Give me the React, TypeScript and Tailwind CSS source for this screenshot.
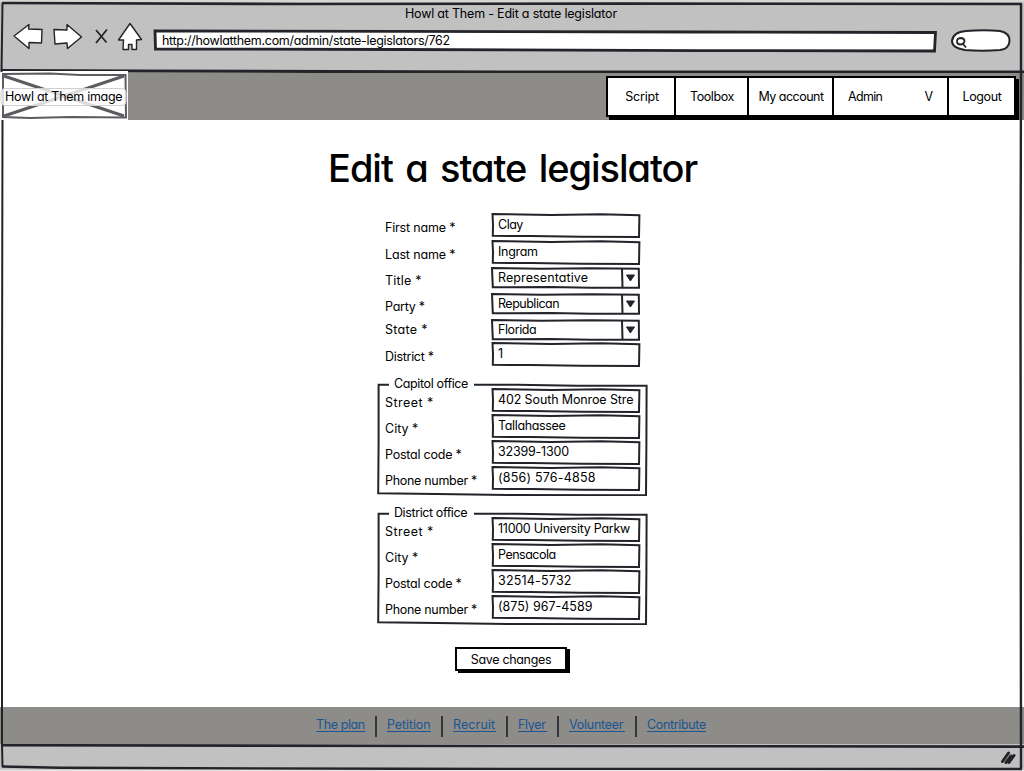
import type { ReactNode } from "react";

const INK = "#22242a";

function Label({ children, className = "" }: { children: ReactNode; className?: string }) {
  return <span className={`block whitespace-nowrap leading-[16px] ${className}`}>{children}</span>;
}

function FieldFrame() {
  return (
    <svg className="absolute inset-0 h-full w-full" viewBox="0 0 150 25" preserveAspectRatio="none" fill="none" stroke={INK} strokeWidth="2">
      <path d="M1.5 1 L60 2 L110 1.3 L148.4 2.2 L148 24 L90 23.8 L40 23 L1.8 22.8 L2 12 Z" fill="#fff" vectorEffect="non-scaling-stroke" />
    </svg>
  );
}

function TextField({ value, spacing }: { value: string; spacing: string }) {
  return (
    <div className="relative h-[25px] w-[150px] shrink-0">
      <FieldFrame />
      <Label className={`relative pl-[7px] pt-[4px] ${spacing}`}>{value}</Label>
    </div>
  );
}

function SelectField({ value, spacing }: { value: string; spacing: string }) {
  return (
    <div className="relative mt-[1px] h-[22px] w-[150px] shrink-0">
      <svg className="absolute inset-0 h-full w-full" viewBox="0 0 150 22" fill="none" stroke={INK} strokeWidth="2">
        <path d="M1 1 L50 1.8 L100 1.2 L147.8 1.8 L148 20.8 L100 20.8 L60 20 L1.8 20.2 Z" fill="#fff" />
        <path d="M131 1.5 L131.5 20.5" />
        <path d="M135.5 8 L143.5 8 L139.4 14 Z" fill={INK} strokeWidth="1" />
      </svg>
      <Label className={`relative pl-[7px] pt-[3px] ${spacing}`}>{value}</Label>
    </div>
  );
}

type RowProps = { label: string; ls: string; value: string; vs: string; select?: boolean; size: string; pad: string };

function Row({ label, ls, value, vs, select, size, pad }: RowProps) {
  return (
    <div className={`flex items-start ${size}`}>
      <Label className={`w-[106px] shrink-0 ${pad} ${ls}`}>{label}</Label>
      {select ? <SelectField value={value} spacing={vs} /> : <TextField value={value} spacing={vs} />}
    </div>
  );
}

function Office({ title, ts, rows }: { title: string; ts: string; rows: [string, string, string, string][] }) {
  return (
    <section className="relative h-[114px] w-[271px]">
      <svg className="absolute inset-0 h-full w-full" viewBox="0 0 271 114" fill="none" stroke={INK} strokeWidth="2">
        <path d="M12 2.8 L1.6 2.8 L1.6 60 L1.2 111.3 L60 112 L130 113 L269 113.3 L269.4 60 L269.6 3.8 L200 3.8 L140 2.8 L97 2.8" />
      </svg>
      <Label className={`absolute -top-[6px] left-[17px] ${ts}`}>{title}</Label>
      <div className="relative pl-[8px] pt-[6px]">
        {rows.map(([label, ls, value, vs]) => (
          <Row key={label} label={label} ls={ls} value={value} vs={vs} size="h-[26px]" pad="pt-[7px]" />
        ))}
      </div>
    </section>
  );
}

function NavItem({ children, width }: { children: ReactNode; width: string }) {
  return <div className={`flex items-center justify-center whitespace-nowrap border-l-2 border-black ${width}`}>{children}</div>;
}

function BrowserBar() {
  return (
    <header className="relative h-[73px] shrink-0 bg-[#c1c1c1]">
      <svg className="absolute inset-0" width="1024" height="73" fill="none" stroke={INK}>
        <path d="M0 1 H1024" stroke="#d6d6d2" strokeWidth="2" />
        <path d="M2 3 L300 4 L620 3.6 L1022 4" strokeWidth="2.6" />
        <path d="M2 70.5 L140 71 L500 72 L1024 72" strokeWidth="3" />
        <g fill="#fff" strokeWidth="1.4" strokeLinejoin="round">
          <path d="M14 36 L29 24.5 L28.5 29 L42 29.5 L41.5 43 L29 42.5 L29 48.5 Z" />
          <path d="M54 29.5 L67 30 L67 24.5 L81.5 37 L67.5 48.5 L67 43 L55 44 Z" />
          <path d="M130 23.5 L141.5 39.5 L136.5 40 L136.5 49.5 L132 49.5 L132 44.5 L128.5 44.5 L128.5 49.5 L123 49.5 L123.5 40 L118.5 40 Z" />
        </g>
        <path d="M96 30 L106.5 42.5 M107 29.5 L96 43" strokeWidth="1.8" />
        <path d="M155 31 L400 31.4 L700 32 L935.5 32.5 L934.5 51 L700 50.6 L400 49.5 L155.5 49 Z" fill="#fff" strokeWidth="2.8" />
        <path d="M966 31 Q984 29.5 1000 31 Q1010 33 1009.5 41 Q1009 49 1000 50 Q982 51.5 965 50 Q952 48 952 41 Q953 32 966 31 Z" fill="#fff" strokeWidth="2" />
        <path d="M960.5 38 Q964.5 38 964.5 41.5 Q963.5 44.5 960.5 44.5 Q957 44.5 957 41.5 Q957 38.300 960.5 38 Z M963 44 L966 47.5" strokeWidth="1.8" />
      </svg>
      <Label className="relative pt-[6px] pl-[405px] tracking-[-0.2px]">Howl at Them - Edit a state legislator</Label>
      <Label className="relative pt-[11px] pl-[162px] tracking-[-0.3px]">http://howlatthem.com/admin/state-legislators/762</Label>
    </header>
  );
}

function Banner() {
  return (
    <div className="flex h-[47px] shrink-0 items-start justify-between bg-[#8d8c89]">
      <div className="relative -mt-[2px] h-[49px] w-[128px] bg-white">
        <svg className="absolute inset-0" width="128" height="49" fill="none" stroke="#5c5c60" strokeWidth="2">
          <path d="M3 3 L50 2.5 L80 4 L125.5 4 L126 46.5 L70 46 L30 47 L3 46 Z" />
          <path d="M4 5 L124 45 M4 45 L124 5" strokeWidth="3" />
          <rect x="1" y="17.5" width="125" height="17" rx="4" fill="#fff" fillOpacity=".78" stroke="#d0d0d0" strokeWidth="1" />
        </svg>
        <Label className="relative pt-[18px] pl-[5px] tracking-[-0.28px]">Howl at Them image</Label>
      </div>
      <nav className="mr-[8px] mt-[3px] flex h-[41px] border-r-2 border-y-2 border-black bg-white shadow-[3px_3px_0_#000]">
        <NavItem width="w-[68px] pl-[2px] tracking-[-0.2px]">Script</NavItem>
        <NavItem width="w-[73px] pl-[1px] tracking-[-0.4px]">Toolbox</NavItem>
        <NavItem width="w-[85px] pl-[1px] tracking-[-0.5px]">My account</NavItem>
        <div className="flex w-[115px] items-center justify-between border-l-2 border-black pl-[14px] pr-[14px]">
          <span className="tracking-[-0.7px]">Admin</span>
          <span>V</span>
        </div>
        <NavItem width="w-[67px] pl-[1px] tracking-[-0.4px]">Logout</NavItem>
      </nav>
    </div>
  );
}

const links: [string, string, string][] = [
  ["The plan", "w-[49px]", "tracking-[-0.4px]"],
  ["Petition", "w-[44px]", "tracking-[-0.1px]"],
  ["Recruit", "w-[43px]", "tracking-[0.1px]"],
  ["Flyer", "w-[29px]", "tracking-[-0.3px]"],
  ["Volunteer", "w-[56px]", "tracking-[-0.25px]"],
  ["Contribute", "w-[59px]", "tracking-[-0.35px]"],
];

export default function App() {
  return (
    <div className="relative flex h-[771px] w-[1024px] flex-col overflow-hidden bg-white font-['Inter','Liberation_Sans',sans-serif] text-[12.5px] leading-[16px] text-black [font-feature-settings:'cv11']">
      <BrowserBar />
      <Banner />
      <main className="flex h-[587px] shrink-0 flex-col">
        <h1 className="mt-[24px] whitespace-nowrap pl-[328px] text-[38px] font-medium leading-[48px] tracking-[-1.03px] [word-spacing:3.3px]">Edit a state legislator</h1>
        <form className="mt-[21px] flex flex-col pl-[377px]">
          <div className="pl-[8px]">
            <Row label="First name *" ls="tracking-[-0.18px]" value="Clay" vs="tracking-[-0.5px]" size="h-[27px]" pad="pt-[7px]" />
            <Row label="Last name *" ls="tracking-[-0.15px]" value="Ingram" vs="tracking-[-0.3px]" size="h-[26px]" pad="pt-[7px]" />
            <Row label="Title *" ls="tracking-[0.2px]" value="Representative" vs="tracking-[0.1px]" select size="h-[26px]" pad="pt-[7px]" />
            <Row label="Party *" ls="tracking-[-0.25px]" value="Republican" vs="tracking-[-0.5px]" select size="h-[26px]" pad="pt-[7px]" />
            <Row label="State *" ls="tracking-[0.3px]" value="Florida" vs="tracking-[-0.4px]" select size="h-[24px]" pad="pt-[4px]" />
            <Row label="District *" ls="tracking-[-0.3px]" value="1" vs="tracking-[0px]" size="h-[40px]" pad="pt-[7px]" />
          </div>
          <Office
            title="Capitol office"
            ts="tracking-[-0.37px]"
            rows={[
              ["Street *", "tracking-[0.45px]", "402 South Monroe Stre", "tracking-[-0.12px]"],
              ["City *", "tracking-[0px]", "Tallahassee", "tracking-[-0.35px]"],
              ["Postal code *", "tracking-[-0.23px]", "32399-1300", "tracking-[-0.2px]"],
              ["Phone number *", "tracking-[-0.3px]", "(856) 576-4858", "tracking-[0.2px]"],
            ]}
          />
          <div className="h-[15px]" />
          <Office
            title="District office"
            ts="tracking-[-0.4px]"
            rows={[
              ["Street *", "tracking-[0.45px]", "11000 University Parkw", "tracking-[-0.27px]"],
              ["City *", "tracking-[0px]", "Pensacola", "tracking-[-0.5px]"],
              ["Postal code *", "tracking-[-0.23px]", "32514-5732", "tracking-[0.2px]"],
              ["Phone number *", "tracking-[-0.3px]", "(875) 967-4589", "tracking-[0px]"],
            ]}
          />
          <button type="button" className="ml-[78px] mt-[22px] h-[24px] w-[112px] whitespace-nowrap border-2 border-black bg-white pt-[2px] leading-[16px] tracking-[-0.33px] shadow-[3px_2px_0_#000]">
            Save changes
          </button>
        </form>
      </main>
      <footer className="flex h-[37px] shrink-0 items-start bg-[#8d8c89] pl-[316px] pt-[9px] text-[#1b5592]">
        {links.map(([text, width, spacing], i) => (
          <div key={text} className="flex">
            {i > 0 && <span className="ml-[10px] mr-[10px] h-[21px] w-[2px] bg-[#33343c]" />}
            <a href="#" className={`mt-[1px] h-[15px] whitespace-nowrap border-b border-[#1b5592] ${width} ${spacing}`}>{text}</a>
          </div>
        ))}
      </footer>
      <div className="h-[27px] shrink-0 bg-[#c1c1c1]">
        <svg width="1024" height="27" fill="none" stroke={INK}>
          <path d="M2 1.2 L500 2 L1024 2.6" strokeWidth="2.6" />
          <path d="M0 26.5 H1024" stroke="#e4e4e4" strokeWidth="1.5" />
          <path d="M2 22.5 L60 23.8 L400 24.8 L1022 25" strokeWidth="2.4" />
          <path d="M1002.5 17.5 L1008.5 9 M1006 18.5 L1011 12 M1009 18.5 L1014 11.5" strokeWidth="3" strokeLinecap="round" />
        </svg>
      </div>
      <svg className="pointer-events-none absolute inset-0" width="1024" height="771" fill="none" stroke={INK}>
        <path d="M2.5 3 L1.5 72 M2.5 120 L2 400 L2 744 L2.5 767" strokeWidth="2" />
        <path d="M1021 4 L1021 72 L1020.5 300 L1021 768" strokeWidth="2.4" />
      </svg>
    </div>
  );
}
